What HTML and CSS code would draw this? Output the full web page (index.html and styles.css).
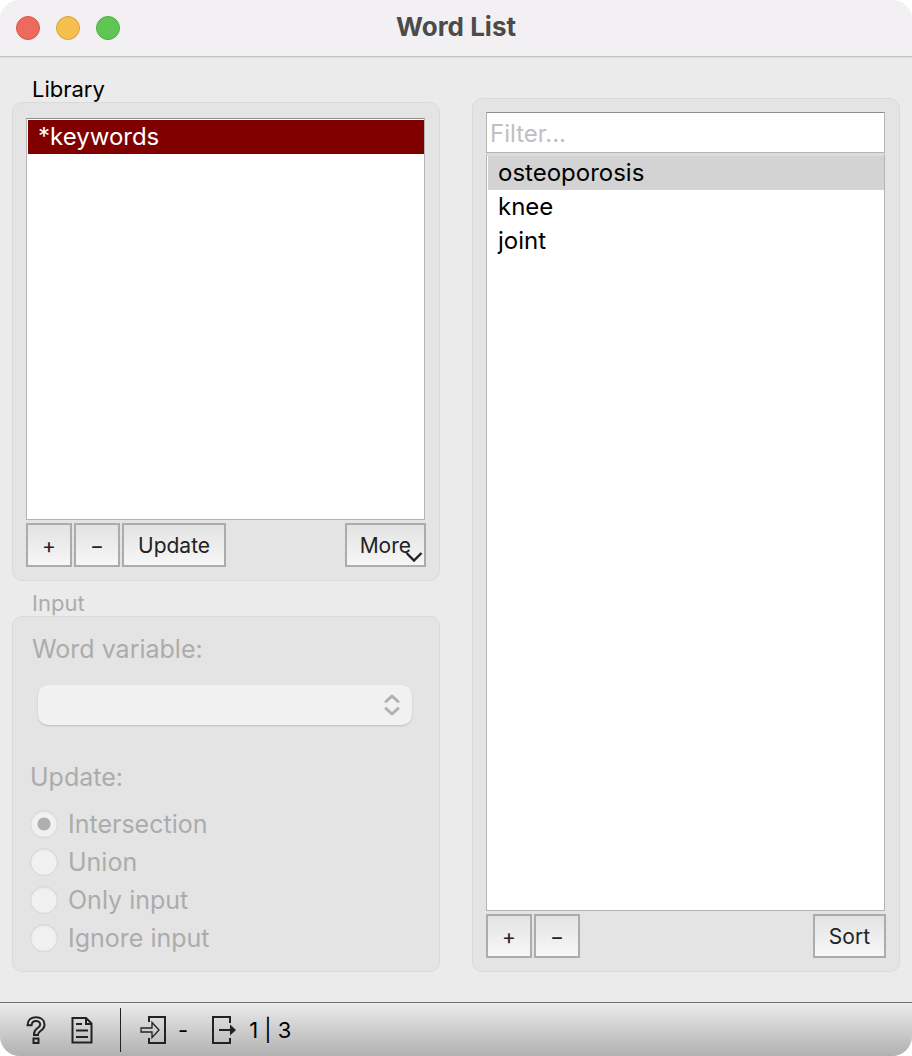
FILE: index.html
```html
<!DOCTYPE html>
<html lang="en">
<head>
  <meta charset="UTF-8" />
  <title>Word List</title>
  <meta name="viewport" content="width=device-width, initial-scale=1.0" />
  <link rel="stylesheet" href="styles.css">
</head>
<body>

<div class="window">
  <header class="titlebar">
    <div class="lights">
      <button class="light close" aria-label="Close"></button>
      <button class="light minimize" aria-label="Minimize"></button>
      <button class="light zoom" aria-label="Zoom"></button>
    </div>
    <h1>Word List</h1>
  </header>

  <main>
    <div class="column">
      <section class="group library">
        <label class="group-title" for="library">Library</label>
        <div class="panel">
          <select class="list library-list" id="library" size="4">
            <option selected>*keywords</option>
          </select>
          <div class="buttons">
            <button class="btn square">+</button>
            <button class="btn square">−</button>
            <button class="btn">Update</button>
            <button class="btn more">More
              <svg class="more-arrow" width="18" height="12" viewBox="0 0 18 12"><path d="M1.500 2 9 9.500 16.500 2" fill="none" stroke="#222" stroke-width="2.400"/></svg>
            </button>
          </div>
        </div>
      </section>

      <fieldset class="group" disabled>
        <legend class="group-title">Input</legend>
        <div class="panel input-panel">
          <label for="wordVar">Word variable:</label>
          <div class="combo">
            <select id="wordVar"></select>
            <svg class="combo-arrows" width="16" height="24" viewBox="0 0 16 24"><path d="M2 8.500 8 3l6 5.500M2 15.500 8 21l6-5.500" fill="none" stroke="#b0b0b0" stroke-width="3" stroke-linecap="round" stroke-linejoin="round"/></svg>
          </div>
          <div class="update-label" id="updateLabel">Update:</div>
          <div class="radios" role="radiogroup" aria-labelledby="updateLabel">
            <label><input type="radio" name="update" checked>Intersection</label>
            <label><input type="radio" name="update">Union</label>
            <label><input type="radio" name="update">Only input</label>
            <label><input type="radio" name="update">Ignore input</label>
          </div>
        </div>
      </fieldset>
    </div>

    <section class="column words">
      <div class="panel">
        <input class="filter" type="text" placeholder="Filter..." aria-label="Filter">
        <select class="list word-list" size="4" aria-label="Words">
          <option selected>osteoporosis</option>
          <option>knee</option>
          <option>joint</option>
        </select>
        <div class="buttons">
          <button class="btn square">+</button>
          <button class="btn square">−</button>
          <button class="btn push">Sort</button>
        </div>
      </div>
    </section>
  </main>

  <footer class="statusbar">
    <button class="icon-btn" aria-label="Help">
      <svg width="20" height="28" viewBox="0 0 20 28" fill="none" stroke="#222" stroke-width="2"><path d="M1.500 9.300C1.500 4 5 1.200 10 1.200c5 0 8.500 2.800 8.500 7.200 0 3.300-1.800 5-4 6.600-1.700 1.200-2.500 1.800-2.500 3.500v.5H8v-1c0-3 1.300-4.200 3.300-5.700 1.800-1.300 2.900-2.100 2.900-3.900 0-2.100-1.600-3.300-4.200-3.300-2.700 0-4.200 1.500-4.400 4.200z"/><path d="M7.500 22.500h5v4.500h-5z"/></svg>
    </button>
    <button class="icon-btn" aria-label="Report">
      <svg width="22" height="28" viewBox="0 0 22 28" fill="none" stroke="#222" stroke-width="2"><path d="M1.500 2h13.500l5.500 5.500V26.500h-19z"/><path d="M15 2v6h5.500M5 8h6M5 14.500h12M5 21h12"/></svg>
    </button>
    <div class="divider"></div>
    <button class="status">
      <svg width="26" height="30" viewBox="0 0 26 30" fill="none" stroke="#222"><path d="M9 7V2h16v26H9v-5" stroke-width="2"/><path d="M1 13h11V7.500l7 7.500-7 7.500V17H1z" stroke-width="1.300"/></svg>
      <span>-</span>
    </button>
    <button class="status output">
      <svg width="26" height="30" viewBox="0 0 26 30" fill="none" stroke="#222"><path d="M19 8V2H2v26h17v-5M8 15h11" stroke-width="2"/><path d="M19 9.500 25 15l-6 5.500z" fill="#222" stroke="none"/></svg>
      <span>1 | 3</span>
    </button>
  </footer>
</div>

</body>
</html>
```

FILE: styles.css
```css
* {
  box-sizing: border-box;
}

body {
  margin: 0;
  background: #fff;
  font-family: Inter, "Liberation Sans", sans-serif;
  font-size: 24px;
  color: #000;
}

button, input, select {
  font-family: inherit;
  margin: 0;
}

svg {
  display: block;
}

.window {
  display: flex;
  flex-direction: column;
  min-height: 100vh;
  background: #ebebeb;
  border-radius: 20px;
  overflow: hidden;
}

/* title bar */
.titlebar {
  display: grid;
  grid-template-columns: 1fr auto 1fr;
  align-items: center;
  height: 58px;
  padding: 0 16px 2px;
  background: #f3f0f3;
  border-bottom: 1px solid #dcdcdc;
  box-shadow: inset 0 -1px #c2c2c2;
}

.lights {
  display: flex;
  gap: 16px;
}

.light {
  width: 24px;
  height: 24px;
  padding: 0;
  border: 1px solid;
  border-radius: 50%;
}

.close {
  background: #ed6a5f;
  border-color: #d5564b;
}

.minimize {
  background: #f5bf4f;
  border-color: #d8a13c;
}

.zoom {
  background: #61c554;
  border-color: #50a941;
}

h1 {
  margin: 0;
  padding-bottom: 2px;
  font-size: 26px;
  line-height: 32px;
  color: #4b4b4b;
}

/* main area */
main {
  flex: 1;
  display: grid;
  grid-template-columns: 1fr 1fr;
  gap: 32px;
  padding: 20px 12px 30px;
}

.column {
  display: flex;
  flex-direction: column;
  gap: 11px;
}

.words {
  padding-top: 20px;
}

.group {
  margin: 0;
  padding: 0;
  border: 0;
  min-width: 0;
}

.library {
  flex: 1;
  display: flex;
  flex-direction: column;
}

.group-title {
  padding: 0 20px 2px;
  font-size: 22px;
  line-height: 22px;
}

.panel {
  flex: 1;
  display: flex;
  flex-direction: column;
  padding: 15px 13px 13px;
  background: #e4e4e4;
  border: 1px solid #dadada;
  border-radius: 10px;
}

.words .panel {
  padding-top: 13px;
}

.list {
  flex: 1;
  width: calc(100% - 1px);
  padding: 1px 0 0 1px;
  background: #fff;
  border: 1px solid #b4b4b4;
  border-top-color: #8e8e8e;
  border-radius: 0;
  font-size: 24px;
  color: #000;
  outline: none;
  overflow: hidden;
}

.list option {
  height: 34px;
  min-height: 34px;
  padding: 2px 10px 0;
}

.library-list option:checked {
  background: linear-gradient(#800000, #800000);
  -webkit-text-fill-color: #fff;
}

.word-list {
  padding-top: 0;
  border-top: 3px solid #dcdcdc;
}

.word-list option:checked {
  background: linear-gradient(#d3d3d3, #d3d3d3);
  -webkit-text-fill-color: #000;
}

.filter {
  width: calc(100% - 1px);
  height: 41px;
  padding: 2px 3px 0;
  border: 1px solid #b4b4b4;
  border-top-color: #8e8e8e;
  border-radius: 0;
  font-size: 24px;
}

.filter::placeholder {
  color: #bfbfbf;
}

/* buttons */
.buttons {
  display: flex;
  gap: 2px;
  padding-top: 3px;
}

.btn {
  height: 44px;
  padding: 0 14px;
  background: linear-gradient(#e3e3e3, #f7f7f7);
  border: 2px solid #acacac;
  font-size: 21px;
  color: #222;
}

.square {
  width: 46px;
  padding: 0;
}

.push,
.more {
  margin-left: auto;
}

.more {
  position: relative;
  padding: 0 13px;
}

.more-arrow {
  position: absolute;
  right: 1px;
  bottom: 2px;
}

/* disabled input group */
fieldset {
  color: #acacac;
}

.input-panel {
  padding: 16px 17px 13px;
  font-size: 25px;
}

.input-panel > label {
  padding-left: 2px;
  line-height: 32px;
}

.combo {
  position: relative;
  margin: 20px 10px 36px 8px;
}

.combo select {
  display: block;
  appearance: none;
  width: 100%;
  height: 40px;
  background: #f1f1f1;
  border: 0;
  border-radius: 10px;
  box-shadow: 0 1px 2px #bdbdbd;
  opacity: 1;
}

.combo-arrows {
  position: absolute;
  right: 12px;
  top: 8px;
  pointer-events: none;
}

.update-label {
  line-height: 32px;
}

.radios {
  display: flex;
  flex-direction: column;
  padding: 12px 0 1px;
}

.radios label {
  display: flex;
  align-items: center;
  gap: 10px;
  height: 38px;
}

.radios input {
  appearance: none;
  width: 28px;
  height: 28px;
  background: #f1f1f1;
  border: 1px solid #d6d6d6;
  border-radius: 50%;
  box-shadow: inset 0 1px 2px #dedede;
}

.radios input:checked {
  background: radial-gradient(circle, #b0b0b0 6px, #f1f1f1 7px);
}

/* status bar */
.statusbar {
  display: flex;
  align-items: center;
  height: 54px;
  padding-left: 26px;
  background: linear-gradient(#ebebeb, #b1b1b1);
  border-top: 1px solid #6e6e6e;
}

.icon-btn,
.status {
  padding: 0;
  background: none;
  border: 0;
  color: #000;
}

.icon-btn + .icon-btn {
  margin-left: 25px;
}

.divider {
  width: 1px;
  height: 44px;
  margin: 0 19px 0 27px;
  background: #222;
}

.status {
  display: flex;
  align-items: center;
  gap: 12px;
  font-size: 22px;
}

.output {
  margin-left: 23px;
}
```
